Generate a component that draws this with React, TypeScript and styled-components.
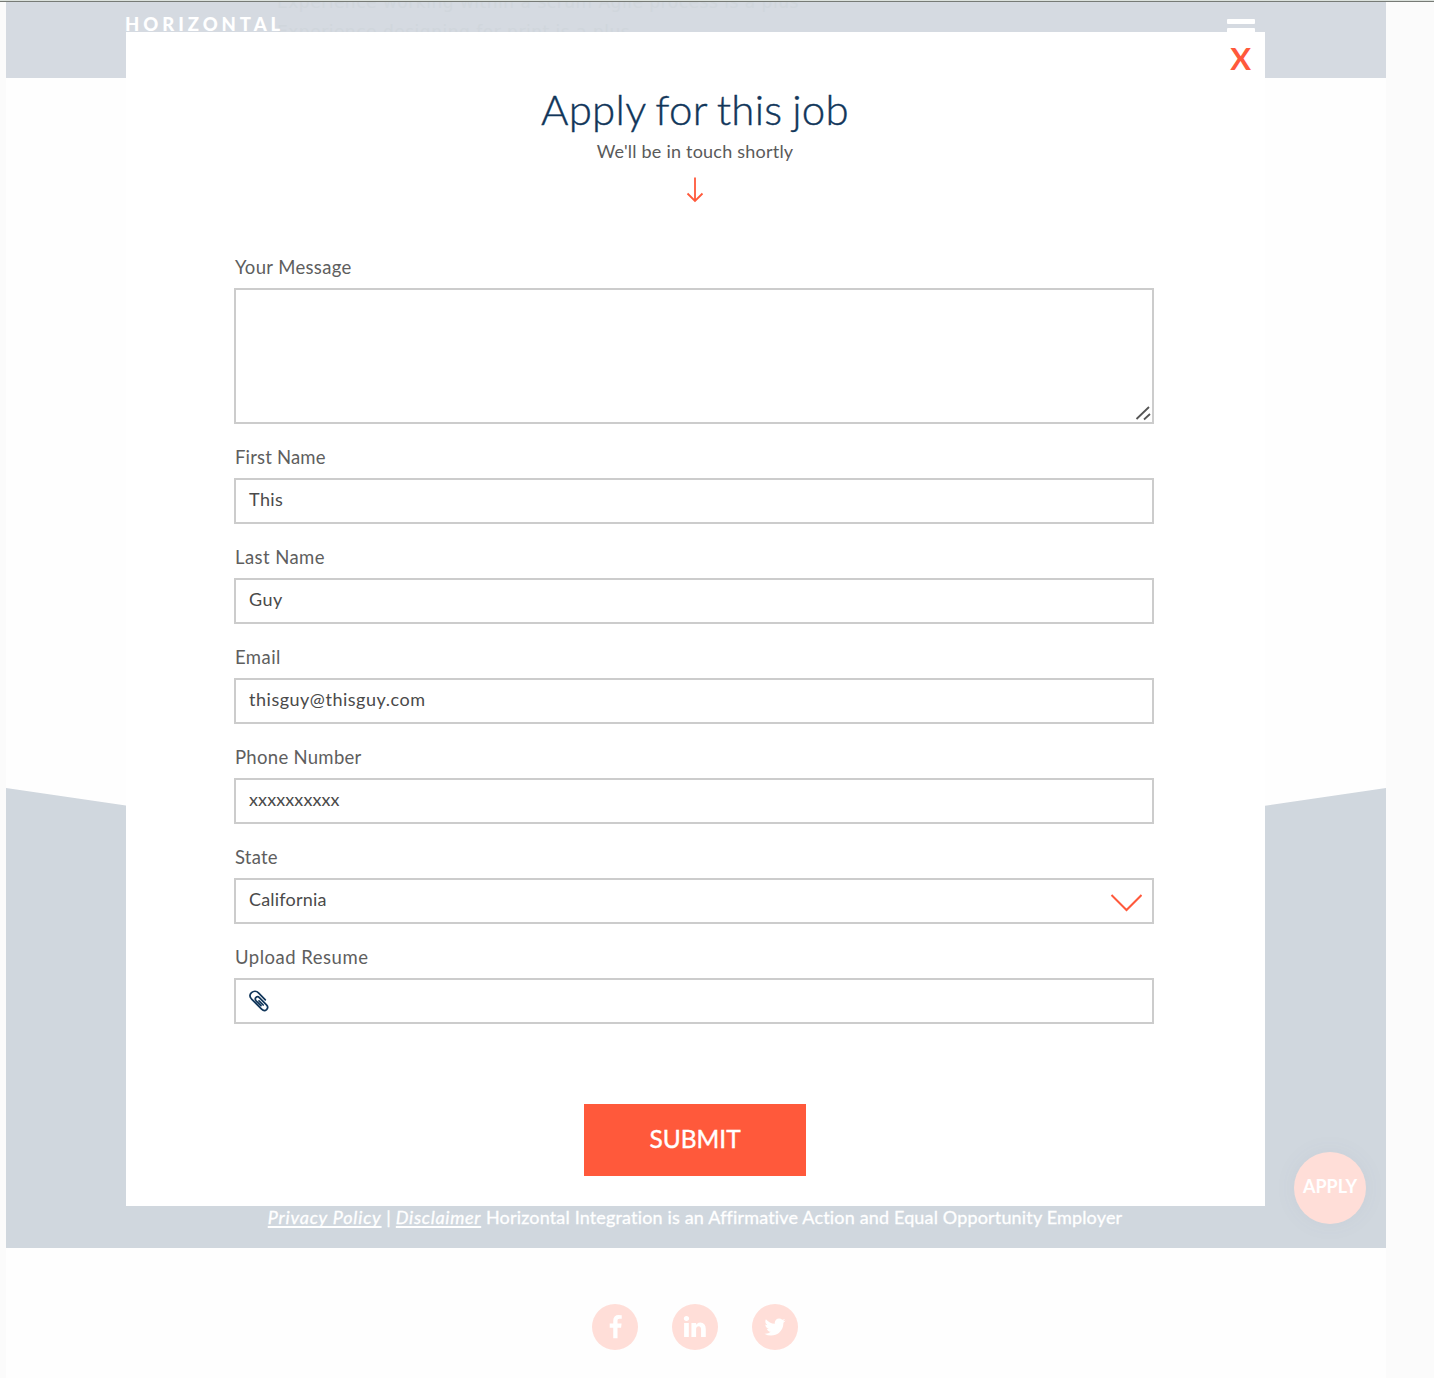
import React from "react";
import styled, { createGlobalStyle } from "styled-components";

const GlobalStyle = createGlobalStyle`
  * { box-sizing: border-box; }
  body {
    margin: 0;
    background: #fbfbfb;
    font-family: Lato, "Open Sans", sans-serif;
    overflow: hidden;
  }
  svg { flex-shrink: 0; }
`;

const Screen = styled.div`
  position: relative;
  height: 1378px;
  padding: 0 48px 0 6px;
  border-top: 1px solid #dbe1dc;
  overflow: hidden;
  &::before {
    content: "";
    position: absolute;
    z-index: 5;
    inset: 0 0 auto 0;
    height: 1px;
    background: #777b76;
  }
`;

const Page = styled.div`
  display: flex;
  flex-direction: column;
  height: 1377px;
  background: #fefefe;
`;

const Header = styled.header`
  position: relative;
  display: flex;
  justify-content: space-between;
  align-items: flex-start;
  height: 77px;
  padding: 17px 131px 0 119px;
  background: #d5dae1;
  overflow: hidden;
`;

const Logo = styled.div`
  position: relative;
  font-size: 18.5px;
  line-height: 13px;
  font-weight: 900;
  letter-spacing: 3.95px;
  color: #fff;
`;

const MenuIcon = styled.div`
  display: grid;
  gap: 4px;
  width: 28px;
  margin-top: 1px;
  & > span {
    height: 5px;
    border-radius: 1px;
    background: #fff;
  }
`;

const GhostList = styled.div`
  position: absolute;
  left: 271px;
  top: -14px;
  font: 17px/30px "DejaVu Sans", sans-serif;
  letter-spacing: 0.52px;
  color: #d0d6dc;
  white-space: nowrap;
`;

const Footer = styled.footer`
  display: flex;
  justify-content: center;
  align-items: flex-end;
  height: 460px;
  margin-top: 710px;
  padding-bottom: 19px;
  background: #d0d7de;
  clip-path: polygon(0 0, 50% 101px, 100% 0, 100% 100%, 0 100%);
`;

const Legal = styled.p`
  margin: 0 0 0 -2px;
  font-size: 18px;
  line-height: 24px;
  letter-spacing: 0.16px;
  color: #fff;
  -webkit-text-stroke: 0.3px #fff;
  white-space: nowrap;
`;

const LegalLink = styled.a<{ $spacing: number }>`
  letter-spacing: ${(p) => p.$spacing}px;
  font-style: italic;
  text-decoration: underline;
  text-decoration-thickness: 2px;
  text-underline-offset: 2px;
  text-decoration-skip-ink: none;
`;

const Social = styled.nav`
  display: flex;
  justify-content: center;
  gap: 34px;
  margin: 56px 2px 0 0;
`;

const SocialLink = styled.a`
  display: flex;
  align-items: center;
  justify-content: center;
  width: 46px;
  height: 46px;
  border-radius: 50%;
  background: #ffded8;
  color: #fff;
`;

const ApplyBadge = styled.div`
  position: absolute;
  left: 1294px;
  top: 1151px;
  display: flex;
  justify-content: center;
  width: 72px;
  height: 72px;
  padding-top: 23px;
  border-radius: 50%;
  background: #ffded8;
  box-shadow: 0 0 24px rgba(100, 90, 130, 0.05);
  font-size: 18px;
  line-height: 22px;
  font-weight: 700;
  color: #fff;
`;

const Dialog = styled.section`
  position: absolute;
  left: 126px;
  top: 31px;
  display: flex;
  flex-direction: column;
  align-items: center;
  width: 1139px;
  height: 1174px;
  padding: 54px 109px 30px 108px;
  background: #fff;
`;

const Close = styled.button`
  position: absolute;
  right: 14px;
  top: 6px;
  padding: 0;
  border: 0;
  background: none;
  font: 700 31px/40px Lato, sans-serif;
  color: #ff593b;
`;

const Title = styled.h1`
  margin: 0;
  font-size: 42px;
  line-height: 46px;
  font-weight: 300;
  letter-spacing: 0.3px;
  word-spacing: -2px;
  color: #11365a;
  -webkit-text-stroke: 0.4px #11365a;
  white-space: nowrap;
`;

const Subtitle = styled.p`
  margin: 7px 0 14px;
  font-size: 18px;
  line-height: 24px;
  color: #5a5a5a;
  letter-spacing: 0.22px;
`;

const Form = styled.form`
  display: flex;
  flex-direction: column;
  align-self: flex-start;
  width: 920px;
  margin-top: 51px;
`;

const Field = styled.div`
  margin-bottom: 20px;
`;

const Label = styled.label<{ $spacing: number }>`
  display: block;
  height: 34px;
  padding: 1px 0 0 1px;
  font-size: 18.5px;
  line-height: 24px;
  letter-spacing: ${(p) => p.$spacing}px;
  color: #5e5e5e;
`;

const Control = styled.div<{ $spacing?: number }>`
  display: flex;
  align-items: center;
  justify-content: space-between;
  height: 46px;
  padding: 0 10px 3px 13px;
  border: 2px solid #ccc;
  background: #fff;
  font-size: 18px;
  line-height: 23px;
  letter-spacing: ${(p) => p.$spacing ?? 0}px;
  color: #4a4a4a;
`;

const MessageArea = styled(Control)`
  align-items: flex-end;
  justify-content: flex-end;
  height: 136px;
  padding: 0 1px 1px 0;
`;

const Chevron = styled.svg`
  margin: 6px 0 0;
`;

const Clip = styled.svg`
  margin-top: 3px;
`;

const Submit = styled.button`
  width: 222px;
  height: 72px;
  margin-top: 60px;
  padding: 0 0 3px;
  border: 0;
  background: #ff593b;
  font: 400 24.5px/69px Lato, sans-serif;
  color: #fff;
  -webkit-text-stroke: 0.4px #fff;
`;

const FIELDS = [
  { label: "First Name", value: "This", labelSpacing: 0.17, valueSpacing: 0.4 },
  { label: "Last Name", value: "Guy", labelSpacing: 0.43, valueSpacing: 0.5 },
  { label: "Email", value: "thisguy@thisguy.com", labelSpacing: 0.45, valueSpacing: 0.52 },
  { label: "Phone Number", value: "xxxxxxxxxx", labelSpacing: 0.3, valueSpacing: 0.1 },
];

const SOCIAL_ICONS = [
  {
    name: "Facebook",
    size: 25,
    path: "M1343 12v264h-157q-86 0-116 36t-30 108v189h293l-39 296h-254v759h-306v-759h-255v-296h255v-218q0-186 104-288.5t277-102.5q147 0 228 12z",
  },
  {
    name: "LinkedIn",
    size: 25.6,
    path: "M477 625v991h-330v-991h330zm21-306q1 73-50.5 122t-135.5 49h-2q-82 0-132-49t-50-122q0-74 51.5-122.5t134.5-48.5 133 48.5 51 122.5zm1166 729v568h-329v-530q0-105-40.5-164.5t-126.5-59.5q-63 0-105.5 34.5t-63.5 85.5q-11 30-11 81v553h-329q2-399 2-647t-1-296l-1-48h329v144h-2q20-32 41-56t56.5-52 87-43.5 114.5-15.5q171 0 275 113.5t104 332.5z",
  },
  {
    name: "Twitter",
    size: 24,
    path: "M1684 408q-67 98-162 167 1 14 1 42 0 130-38 259.5t-115.5 248.5-184.5 210.5-258 146-323 54.5q-271 0-496-145 35 4 78 4 225 0 401-138-105-2-188-64.5t-114-159.5q33 5 61 5 43 0 85-11-112-23-185.5-111.5t-73.5-205.5v-4q68 38 146 41-66-44-105-115t-39-154q0-88 44-163 121 149 294.5 238.5t371.5 99.5q-8-38-8-74 0-134 94.5-228.5t228.5-94.5q140 0 236 102 109-21 205-78-37 115-142 178 93-10 186-50z",
  },
];

export default function App() {
  return (
    <>
      <GlobalStyle />
      <Screen>
        <Page>
          <Header>
            <GhostList>
              <div>Experience working within a scrum Agile process is a plus</div>
              <div>Experience designing for print is a plus</div>
            </GhostList>
            <Logo>HORIZONTAL</Logo>
            <MenuIcon>
              <span />
              <span />
              <span />
            </MenuIcon>
          </Header>
          <Footer>
            <Legal>
              <LegalLink $spacing={0.83}>Privacy Policy</LegalLink> |{" "}
              <LegalLink $spacing={0.7}>Disclaimer</LegalLink> Horizontal Integration is an Affirmative Action and
              Equal Opportunity Employer
            </Legal>
          </Footer>
          <Social>
            {SOCIAL_ICONS.map((icon) => (
              <SocialLink key={icon.name}>
                <svg width={icon.size} height={icon.size} viewBox="0 0 1792 1792" fill="currentColor">
                  <path d={icon.path} />
                </svg>
              </SocialLink>
            ))}
          </Social>
        </Page>
        <ApplyBadge>APPLY</ApplyBadge>
        <Dialog>
          <Close>X</Close>
          <Title>Apply for this job</Title>
          <Subtitle>We'll be in touch shortly</Subtitle>
          <svg width="18" height="26" viewBox="0 0 18 26" fill="none" stroke="#ff593b" strokeWidth="1.8">
            <path d="M9 0.5V24M1.5 16.5L9 24L16.5 16.5" />
          </svg>
          <Form>
            <Field>
              <Label $spacing={0.35}>Your Message</Label>
              <MessageArea>
                <svg width="16" height="16" viewBox="0 0 16 16" stroke="#555" strokeWidth="1.8">
                  <path d="M1.5 14L14 2M9 14.5L15 9" />
                </svg>
              </MessageArea>
            </Field>
            {FIELDS.map((f) => (
              <Field key={f.label}>
                <Label $spacing={f.labelSpacing}>{f.label}</Label>
                <Control $spacing={f.valueSpacing}>{f.value}</Control>
              </Field>
            ))}
            <Field>
              <Label $spacing={0.2}>State</Label>
              <Control $spacing={0.2}>
                California
                <Chevron width="32" height="18" viewBox="0 0 32 18" fill="none" stroke="#ff593b" strokeWidth="2">
                  <path d="M1.5 1L16.5 16L31.5 1" />
                </Chevron>
              </Control>
            </Field>
            <Field>
              <Label $spacing={0.5}>Upload Resume</Label>
              <Control>
                <Clip width="20" height="22" viewBox="0 0 20 22" fill="none" stroke="#11365a" strokeWidth="1.7" strokeLinecap="round">
                  <path d="M16.3 9.8L9.5 2.8C7.5 0.7 4.5 0.8 2.5 2.6C0.6 4.4 0.6 6.8 2.4 8.8L12.6 19.2C14.2 20.8 16.2 20.9 17.6 19.6C19 18.2 18.9 16.3 17.5 14.8L10.6 7.8C9.4 6.6 8 6.5 7 7.4C6 8.4 6 9.6 7.1 10.8L12 15.6M10 10.8L14.2 15" />
                </Clip>
              </Control>
            </Field>
          </Form>
          <Submit>SUBMIT</Submit>
        </Dialog>
      </Screen>
    </>
  );
}
